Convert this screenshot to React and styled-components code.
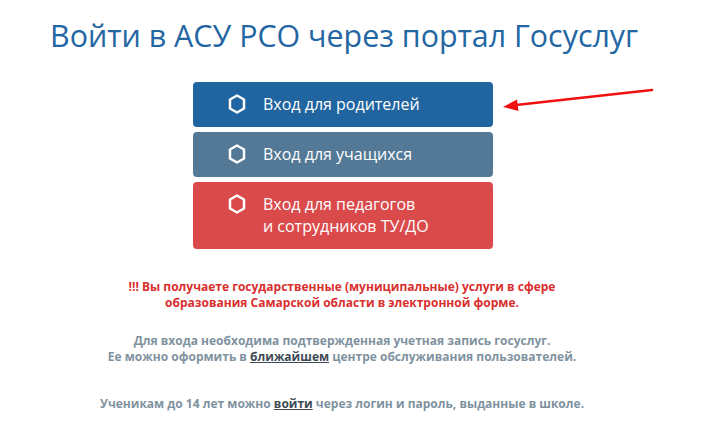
import React from "react";
import styled, { createGlobalStyle } from "styled-components";

const Global = createGlobalStyle`
  html, body {
    margin: 0;
    padding: 0;
    background: #fff;
  }
  body {
    font-family: "Open Sans", "Noto Sans", sans-serif;
  }
`;

const Page = styled.div`
  position: relative;
  width: 711px;
  height: 430px;
  overflow: hidden;
  background: #fff;
`;

const Title = styled.h1`
  margin: 0;
  padding: 18px 0 0 50px;
  font-weight: 400;
  font-size: 30.4px;
  line-height: 36px;
  color: #2366a3;
`;

const ButtonList = styled.div`
  display: flex;
  flex-direction: column;
  gap: 5px;
  width: 300px;
  margin: 28px 0 0 193px;
`;

const LoginButton = styled.a`
  display: flex;
  align-items: flex-start;
  box-sizing: border-box;
  min-height: 45px;
  padding: 11px 0 12px 34px;
  border-radius: 4px;
  background: ${(p) => p.$bg};
  color: #fff;
  font-size: 16px;
  line-height: 22px;
  text-decoration: none;
  cursor: pointer;
`;

const IconBox = styled.span`
  display: flex;
  align-items: center;
  justify-content: center;
  width: 20px;
  height: 22px;
  margin-right: 16px;
  flex-shrink: 0;
`;

const Label = styled.span`
  display: block;
`;

const Notes = styled.div`
  display: flex;
  flex-direction: column;
  align-items: center;
  width: 684px;
  margin-top: 30px;
`;

const Note = styled.p`
  margin: 0 0 ${(p) => p.$gap || 0}px;
  text-align: center;
  font-weight: 700;
  font-size: 12px;
  line-height: 16px;
  color: ${(p) => p.$color};
`;

const NoteLink = styled.a`
  color: #3d4a54;
  text-decoration: underline;
`;

const Arrow = styled.svg`
  position: absolute;
  left: 498px;
  top: 84px;
`;

function Hexagon() {
  return (
    <svg width="20" height="22" viewBox="0 0 20 22">
      <polygon
        points="10,2.5 17,6.5 17,15.5 10,19.5 3,15.5 3,6.5"
        fill="none"
        stroke="#fff"
        strokeWidth="2.5"
        strokeLinejoin="round"
      />
    </svg>
  );
}

const buttons = [
  { bg: "#2065a0", lines: ["Вход для родителей"] },
  { bg: "#537996", lines: ["Вход для учащихся"] },
  { bg: "#da4a4b", lines: ["Вход для педагогов", "и сотрудников ТУ/ДО"] },
];

export default function App() {
  return (
    <Page>
      <Global />
      <Title>Войти в АСУ РСО через портал Госуслуг</Title>
      <ButtonList>
        {buttons.map((b) => (
          <LoginButton key={b.lines[0]} $bg={b.bg}>
            <IconBox>
              <Hexagon />
            </IconBox>
            <Label>
              {b.lines.map((l) => (
                <div key={l}>{l}</div>
              ))}
            </Label>
          </LoginButton>
        ))}
      </ButtonList>
      <Notes>
        <Note $color="#d92f2e" $gap={22}>
          !!! Вы получаете государственные (муниципальные) услуги в сфере
          <br />
          образования Самарской области в электронной форме.
        </Note>
        <Note $color="#7f929f" $gap={31}>
          Для входа необходима подтвержденная учетная запись госуслуг.
          <br />
          Ее можно оформить в <NoteLink>ближайшем</NoteLink> центре
          обслуживания пользователей.
        </Note>
        <Note $color="#7f929f">
          Ученикам до 14 лет можно <NoteLink>войти</NoteLink> через логин и
          пароль, выданные в школе.
        </Note>
      </Notes>
      <Arrow width="160" height="30" viewBox="0 0 160 30">
        <line x1="154" y1="6" x2="18" y2="21" stroke="#f01010" strokeWidth="2.5" strokeLinecap="round" />
        <polygon points="5,23 19,15.5 20.5,27" fill="#f01010" />
      </Arrow>
    </Page>
  );
}
